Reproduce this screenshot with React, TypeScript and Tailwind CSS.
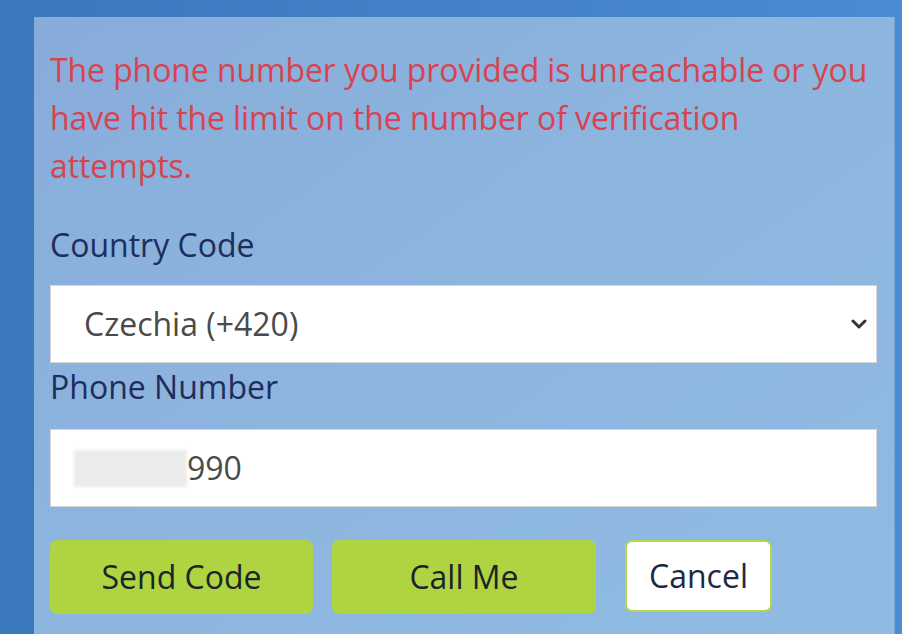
const font = { fontFamily: '"Open Sans", "Noto Sans", sans-serif' };

const Chevron = () => (
  <svg width="16" height="12" viewBox="0 0 16 12" fill="none" stroke="#333" strokeWidth="3" strokeLinecap="round" strokeLinejoin="round">
    <path d="M2 3l6 6 6-6" />
  </svg>
);

export default function App() {
  return (
    <div
      className="w-[902px] h-[634px] overflow-hidden flex bg-gradient-to-r from-[#3b77bd] to-[#4a8bd3] pt-[17px] pl-[34px]"
      style={font}
    >
      <div className="w-[860px] h-[617px] bg-gradient-to-br from-[#88acda] via-[#8db6df] to-[#8fbbe3] px-4 pt-[29px] shadow-[1px_0_0_#7aa5d8]">
        <p className="text-[32px] leading-[48px] text-[#d9434f] tracking-[-0.1px]">
          The phone number you provided is unreachable or you
          <br />
          have hit the limit on the number of verification
          <br />
          attempts.
        </p>

        <label className="block mt-[31px] text-[32px] leading-[48px] text-[#1f2d5c]">Country Code</label>
        <div className="mt-[16px] h-[78px] w-[827px] bg-white border border-[#d6d6d6] flex items-center justify-between pl-[33px] pr-[9px]">
          <span className="text-[32px] text-[#4a4a4a]">Czechia (+420)</span>
          <Chevron />
        </div>

        <label className="block text-[32px] leading-[48px] text-[#1f2d5c]">Phone Number</label>
        <div className="mt-[18px] h-[78px] w-[827px] bg-white border border-[#d6d6d6] flex items-center pl-[23px]">
          <div className="w-[113px] h-[37px] bg-[#ececec] blur-[1.5px]" />
          <span className="text-[32px] text-[#4a4a4a]">990</span>
        </div>

        <div className="mt-[33px] flex items-start">
          <button className="w-[263px] h-[74px] rounded-[7px] bg-[#afd442] text-[32px] text-[#1c2428]">Send Code</button>
          <button className="ml-[19px] w-[264px] h-[74px] rounded-[7px] bg-[#afd442] text-[32px] text-[#1c2428]">Call Me</button>
          <button className="ml-[29px] w-[147px] h-[72px] rounded-[7px] bg-white border-2 border-[#b3d64a] text-[32px] text-[#1c2a44]">Cancel</button>
        </div>
      </div>
    </div>
  );
}
